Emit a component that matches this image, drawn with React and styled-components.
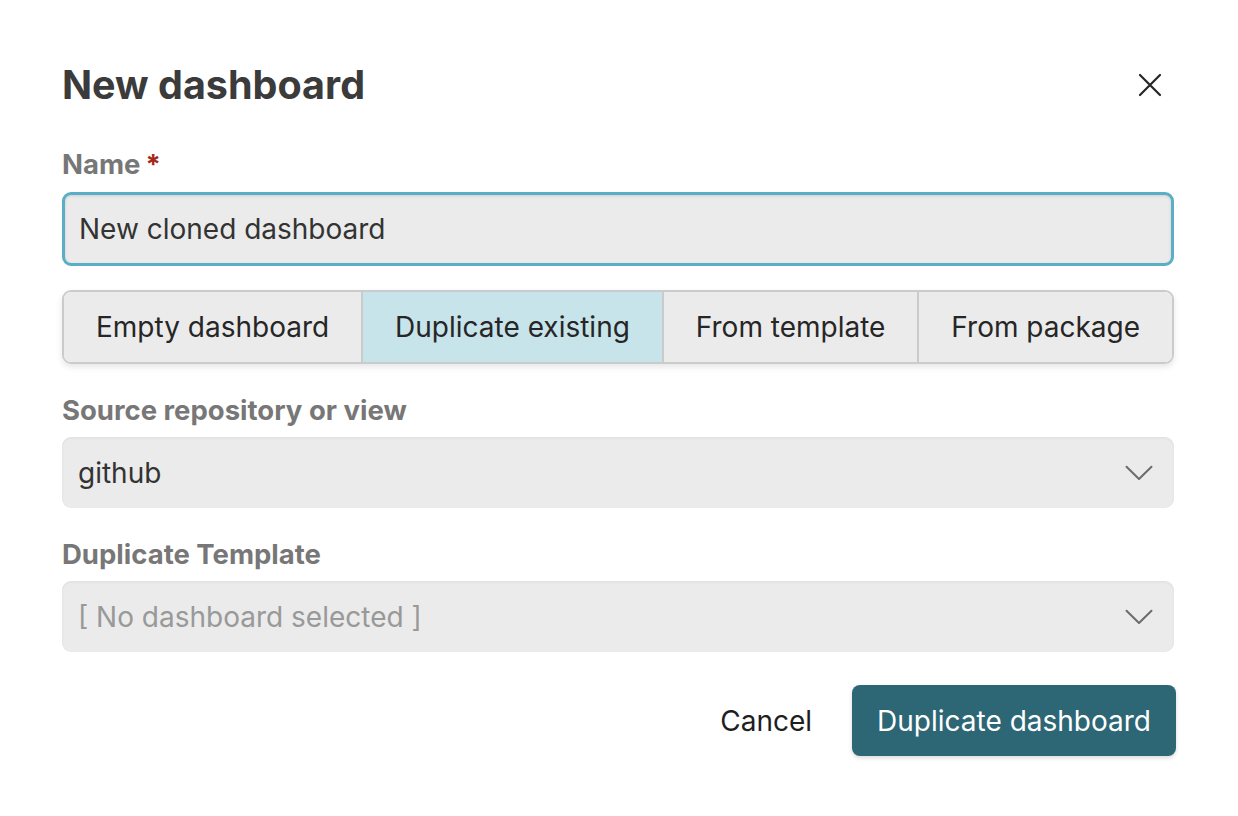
import React, { useState } from "react";
import styled, { createGlobalStyle } from "styled-components";

const GlobalStyle = createGlobalStyle`
  html, body {
    margin: 0;
    padding: 0;
    background: #ffffff;
  }
  body {
    font-family: Inter, "Noto Sans", "Liberation Sans", sans-serif;
  }
`;

const tabs = ["Empty dashboard", "Duplicate existing", "From template", "From package"];

const Chevron = () => (
  <svg width="28" height="16" viewBox="0 0 28 16" fill="none">
    <path d="M1.5 1.8 L14 14 L26.5 1.8" stroke="#6b6b6b" strokeWidth="2" strokeLinecap="round" strokeLinejoin="round" />
  </svg>
);

const App = () => {
  const [name, setName] = useState("New cloned dashboard");
  const [active, setActive] = useState(1);

  return (
    <>
      <GlobalStyle />
      <Dialog>
        <Header>
          <Title>New dashboard</Title>
          <CloseBtn aria-label="Close">
            <svg width="24" height="24" viewBox="0 0 24 24" fill="none">
              <path d="M2 2 L22 22 M22 2 L2 22" stroke="#262626" strokeWidth="2.2" strokeLinecap="round" />
            </svg>
          </CloseBtn>
        </Header>

        <Label $top={42}>
          Name<Required>*</Required>
        </Label>
        <NameInput value={name} onChange={(e) => setName(e.target.value)} />

        <Tabs>
          {tabs.map((t, i) => (
            <Tab key={t} $active={i === active} onClick={() => setActive(i)}>
              {t}
            </Tab>
          ))}
        </Tabs>

        <Label $top={31}>Source repository or view</Label>
        <Select>
          <SelectText>github</SelectText>
          <Chevron />
        </Select>

        <Label $top={31}>Duplicate Template</Label>
        <Select>
          <SelectText $placeholder>[ No dashboard selected ]</SelectText>
          <Chevron />
        </Select>

        <Footer>
          <CancelBtn>Cancel</CancelBtn>
          <PrimaryBtn>Duplicate dashboard</PrimaryBtn>
        </Footer>
      </Dialog>
    </>
  );
};

const Dialog = styled.div`
  width: 1112px;
  padding: 63px 62px 40px 62px;
  display: flex;
  flex-direction: column;
`;

const Header = styled.div`
  display: flex;
  align-items: center;
  justify-content: space-between;
  height: 44px;
`;

const Title = styled.h1`
  margin: 0;
  font-size: 39.5px;
  line-height: 44px;
  font-weight: 700;
  color: #3b3b3b;
`;

const CloseBtn = styled.button`
  width: 46px;
  height: 46px;
  margin-right: 1px;
  border: 0;
  background: transparent;
  padding: 0;
  display: flex;
  align-items: center;
  justify-content: center;
  cursor: pointer;
`;

const Label = styled.div`
  margin-top: ${(p) => p.$top}px;
  font-size: 27.5px;
  line-height: 30px;
  font-weight: 700;
  color: #777777;
`;

const Required = styled.span`
  color: #a3291c;
  margin-left: 5px;
`;

const NameInput = styled.input`
  box-sizing: border-box;
  margin-top: 13px;
  width: 100%;
  height: 74px;
  padding: 0 14px;
  font-family: inherit;
  font-size: 28px;
  color: #333333;
  background: #ebebeb;
  border: 3px solid #5aafc6;
  border-radius: 9px;
  outline: none;
  box-shadow: inset 0 1px 3px rgba(0, 0, 0, 0.12);
`;

const Tabs = styled.div`
  margin-top: 24px;
  display: flex;
  height: 74px;
  box-sizing: border-box;
  border: 2px solid #cbcbcb;
  border-radius: 9px;
  overflow: hidden;
  box-shadow: 0 3px 6px rgba(0, 0, 0, 0.1);
`;

const Tab = styled.button`
  flex: 1 1 auto;
  padding: 0 31px;
  border: 0;
  border-left: 2px solid #cbcbcb;
  background: ${(p) => (p.$active ? "#c6e4ea" : "#ebebeb")};
  font-family: inherit;
  font-size: 28px;
  color: #262626;
  cursor: pointer;
  white-space: nowrap;
  &:first-child {
    border-left: 0;
  }
`;

const Select = styled.div`
  margin-top: 12px;
  height: 71px;
  box-sizing: border-box;
  display: flex;
  align-items: center;
  justify-content: space-between;
  padding: 0 21px 0 16px;
  background: #ebebeb;
  border-radius: 9px;
  box-shadow: inset 0 1px 3px rgba(0, 0, 0, 0.06);
`;

const SelectText = styled.span`
  font-size: 28px;
  color: ${(p) => (p.$placeholder ? "#999999" : "#333333")};
`;

const Footer = styled.div`
  margin-top: 33px;
  display: flex;
  justify-content: flex-end;
  align-items: center;
  gap: 16px;
`;

const CancelBtn = styled.button`
  height: 71px;
  padding: 0 24px;
  border: 0;
  background: transparent;
  font-family: inherit;
  font-size: 28px;
  color: #1e1e1e;
  cursor: pointer;
`;

const PrimaryBtn = styled.button`
  height: 71px;
  padding: 0 25px;
  margin-right: -2px;
  border: 0;
  border-radius: 8px;
  background: #2d6674;
  color: #ffffff;
  font-family: inherit;
  font-size: 28px;
  cursor: pointer;
  box-shadow: 0 2px 4px rgba(0, 0, 0, 0.15);
`;

export default App;
